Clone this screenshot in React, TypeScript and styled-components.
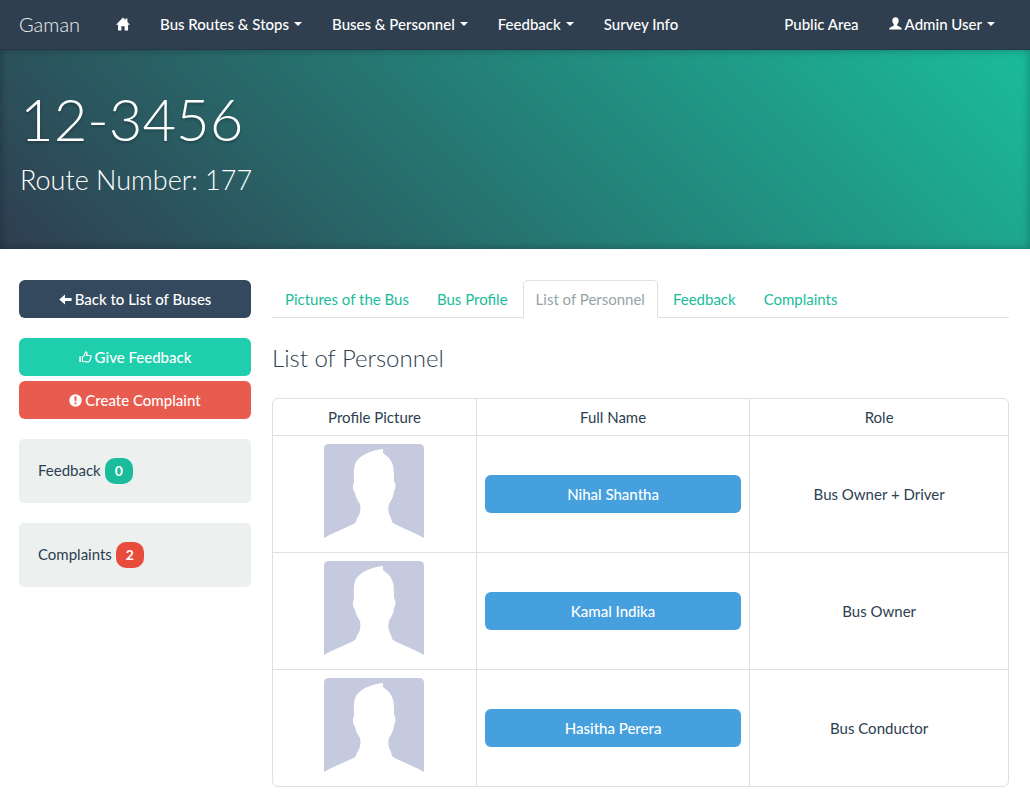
import React from "react";
import styled, { createGlobalStyle } from "styled-components";

const GlobalStyle = createGlobalStyle`
  *, *::before, *::after { box-sizing: border-box; }
  body {
    margin: 0;
    background: #fff;
    color: #2c3e50;
    font: 400 15px/20px Lato, "Liberation Sans", sans-serif;
  }
`;

const Navbar = styled.nav`
  display: flex;
  align-items: center;
  height: 50px;
  padding: 0 20px 2px 19px;
  background: #2f3f50;
  border-bottom: 1px solid #283746;
`;

const Brand = styled.a`
  margin-right: 21px;
  color: #ecf0f1;
  font-size: 20px;
  font-weight: 300;
  text-decoration: none;
`;

const NavList = styled.ul<{ $end?: boolean }>`
  display: flex;
  margin: 0 0 0 ${(p) => (p.$end ? "auto" : "0")};
  padding: 0;
  list-style: none;
`;

const NavLink = styled.a`
  display: flex;
  align-items: center;
  height: 47px;
  padding: 0 15px;
  color: #fff;
  font-weight: 500;
  text-decoration: none;
  white-space: nowrap;
`;

const Caret = styled.span`
  margin-left: 5px;
  border-top: 4px solid #fff;
  border-right: 4px solid transparent;
  border-left: 4px solid transparent;
`;

const Masthead = styled.header`
  height: 199px;
  padding: 35px 20px;
  background: linear-gradient(45deg, #2f3e50 0%, #1abc9c 100%);
  box-shadow: inset 0 0 8px rgba(0, 0, 0, 0.3);
  color: #fff;
`;

const BusNumber = styled.h1`
  margin: 0;
  font-size: 58px;
  font-weight: 300;
  line-height: 68px;
  text-shadow: 0 2px 3px rgba(0, 0, 0, 0.25);
`;

const RouteNumber = styled.p`
  margin: 9px 0 0;
  font-size: 27px;
  font-weight: 300;
  line-height: 36px;
`;

const Columns = styled.div`
  display: grid;
  grid-template-columns: 232fr 737fr;
  gap: 21px;
  padding: 31px 21px 12px 19px;
`;

const Sidebar = styled.aside`
  display: flex;
  flex-direction: column;
  gap: 20px;
`;

const ActionGroup = styled.div`
  display: flex;
  flex-direction: column;
  gap: 5px;
`;

const Button = styled.button<{ $color: string }>`
  display: flex;
  align-items: center;
  justify-content: center;
  width: 100%;
  height: 38px;
  padding: 0 12px;
  border: 0;
  border-radius: 6px;
  background: ${(p) => p.$color};
  color: #fff;
  font: inherit;
  font-weight: 500;
`;

const Well = styled.div`
  display: flex;
  align-items: baseline;
  gap: 4px;
  height: 64px;
  padding: 19px;
  border-radius: 5px;
  background: #ecf0ef;
`;

const Badge = styled.span<{ $color: string }>`
  min-width: 28px;
  border-radius: 10px;
  background: ${(p) => p.$color};
  color: #fff;
  font-size: 14px;
  font-weight: 700;
  line-height: 26px;
  text-align: center;
`;

const Tabs = styled.ul`
  display: flex;
  gap: 2px;
  margin: 0;
  padding: 0;
  border-bottom: 1px solid #dde0e2;
  list-style: none;
`;

const Tab = styled.a<{ $active?: boolean }>`
  display: block;
  height: 38px;
  margin-bottom: -1px;
  padding: 8px 12px;
  border: 1px solid ${(p) => (p.$active ? "#dde0e2" : "transparent")};
  border-bottom-color: ${(p) => (p.$active ? "#fff" : "transparent")};
  border-radius: 5px 5px 0 0;
  color: ${(p) => (p.$active ? "#95a5a6" : "#1abc9c")};
  text-decoration: none;
  white-space: nowrap;
`;

const SectionTitle = styled.h2`
  margin: 26px 0;
  font-size: 24px;
  font-weight: 300;
  line-height: 28px;
`;

const Table = styled.table`
  width: 100%;
  table-layout: fixed;
  border: 1px solid #dde0e2;
  border-radius: 6px;
  border-collapse: separate;
  border-spacing: 0;
  text-align: center;

  th, td { padding: 8px; font-weight: 400; }
  th { height: 36px; }
  td { border-top: 1px solid #dde0e2; }
  th + th, td + td { border-left: 1px solid #dde0e2; }
`;

const PictureCol = styled.col`
  width: 27.6%;
`;

const NameCol = styled.col`
  width: 37.2%;
`;

const Portrait = styled.svg`
  display: block;
  width: 100px;
  height: 100px;
  margin: 0 auto;
`;

const Icon = styled.svg`
  flex: none;
  width: 13px;
  height: 13px;
  margin-right: 3px;
  fill: currentColor;
`;

const HomeGlyph = styled(Icon)`
  width: 14px;
  height: 14px;
  margin-right: 0;
`;

const HomeIcon = () => (
  <HomeGlyph viewBox="0 0 13 13" role="img" aria-label="Home">
    <path d="M6.5 0.5 L8.8 2.8 V1.5 H10.6 V4.6 L13 7.1 H11.2 V12.5 H8 V8.5 H5 V12.5 H1.9 V7.1 H0 Z" />
  </HomeGlyph>
);

const UserIcon = () => (
  <Icon viewBox="0 0 13 13" aria-hidden="true">
    <path d="M6.5 0.2C8.7 0.2 9.7 1.5 9.7 3.6C9.7 5.4 8.9 6.5 8.2 7.4V8.5C8.4 9.1 12.6 9.7 12.9 12.4H0.1C0.4 9.7 4.6 9.1 4.8 8.5V7.4C4.1 6.5 3.3 5.4 3.3 3.6C3.3 1.5 4.3 0.2 6.5 0.2Z" />
  </Icon>
);

const ArrowIcon = () => (
  <Icon viewBox="0 0 13 13" aria-hidden="true">
    <path d="M0.3 6.5 L6 1.5 V4.9 H12.6 V8.1 H6 V11.5Z" />
  </Icon>
);

const ThumbIcon = () => (
  <Icon viewBox="0 0 13 13" aria-hidden="true">
    <path d="M0.3 5.4H1.9V11H0.3Z" />
    <path
      d="M3.4 6.1C5 5.4 5.6 4 6 2.6C6.2 1.6 6.5 0.8 7.3 1C8.4 1.2 8 3.1 7.4 4.5H11.2C12.2 4.6 12.3 5.6 11.8 6.2C12 6.9 11.8 7.5 11.3 8C11.3 8.7 11.1 9.2 10.6 9.6C10.4 10.5 10 10.8 9 10.8H6.6C5.3 10.8 4.6 10.3 3.4 10.3Z"
      fill="none"
      stroke="currentColor"
      strokeWidth="1.2"
    />
  </Icon>
);

const AlertIcon = () => (
  <Icon viewBox="0 0 13 13" aria-hidden="true">
    <path
      fillRule="evenodd"
      d="M6.5 0.3A6.2 6.2 0 1 1 6.5 12.7A6.2 6.2 0 1 1 6.5 0.3ZM5.3 2.6L5.7 7.3H7.3L7.7 2.6ZM5.5 8.4V10.2H7.5V8.4Z"
    />
  </Icon>
);

const Silhouette = ({ name }: { name: string }) => (
  <Portrait viewBox="0 0 100 100" role="img" aria-label={name}>
    <path
      fill="#c5cadf"
      d="M0 94V5Q0 0 5 0H95Q100 0 100 5V94C92 89 78 84 69 79C67 77 68 75 66 72C64 68 64 64 65 60C68 55 70 51 70 47C72 43 72 40 70 37C70 28 70 22 67 17C65 13 61 11 59 9L59 5C48 6 36 11 32 18C29 24 30 30 30 38C28 42 29 46 31 49C32 54 34 57 36 60C37 66 36 70 34 73C32 75 33 77 31 79C22 84 8 89 0 94Z"
    />
  </Portrait>
);

const menus = ["Bus Routes & Stops", "Buses & Personnel", "Feedback"];
const tabs = ["Pictures of the Bus", "Bus Profile", "List of Personnel", "Feedback", "Complaints"];
const personnel = [
  { name: "Nihal Shantha", role: "Bus Owner + Driver" },
  { name: "Kamal Indika", role: "Bus Owner" },
  { name: "Hasitha Perera", role: "Bus Conductor" },
];

export default function App() {
  return (
    <>
      <GlobalStyle />
      <Navbar>
        <Brand href="#">Gaman</Brand>
        <NavList>
          <li><NavLink href="#"><HomeIcon /></NavLink></li>
          {menus.map((label) => (
            <li key={label}><NavLink href="#">{label}<Caret /></NavLink></li>
          ))}
          <li><NavLink href="#">Survey Info</NavLink></li>
        </NavList>
        <NavList $end>
          <li><NavLink href="#">Public Area</NavLink></li>
          <li><NavLink href="#"><UserIcon />Admin User<Caret /></NavLink></li>
        </NavList>
      </Navbar>
      <Masthead>
        <BusNumber>12-3456</BusNumber>
        <RouteNumber>Route Number: 177</RouteNumber>
      </Masthead>
      <Columns>
        <Sidebar>
          <Button $color="#34495e"><ArrowIcon />Back to List of Buses</Button>
          <ActionGroup>
            <Button $color="#1fceac"><ThumbIcon />Give Feedback</Button>
            <Button $color="#e85c4f"><AlertIcon />Create Complaint</Button>
          </ActionGroup>
          <Well>Feedback<Badge $color="#1abc9c">0</Badge></Well>
          <Well>Complaints<Badge $color="#e74c3c">2</Badge></Well>
        </Sidebar>
        <main>
          <Tabs>
            {tabs.map((label) => (
              <li key={label}>
                <Tab href="#" $active={label === "List of Personnel"}>{label}</Tab>
              </li>
            ))}
          </Tabs>
          <SectionTitle>List of Personnel</SectionTitle>
          <Table>
            <colgroup>
              <PictureCol />
              <NameCol />
              <col />
            </colgroup>
            <thead>
              <tr><th>Profile Picture</th><th>Full Name</th><th>Role</th></tr>
            </thead>
            <tbody>
              {personnel.map(({ name, role }) => (
                <tr key={name}>
                  <td><Silhouette name={name} /></td>
                  <td><Button $color="#45a0dd">{name}</Button></td>
                  <td>{role}</td>
                </tr>
              ))}
            </tbody>
          </Table>
        </main>
      </Columns>
    </>
  );
}
